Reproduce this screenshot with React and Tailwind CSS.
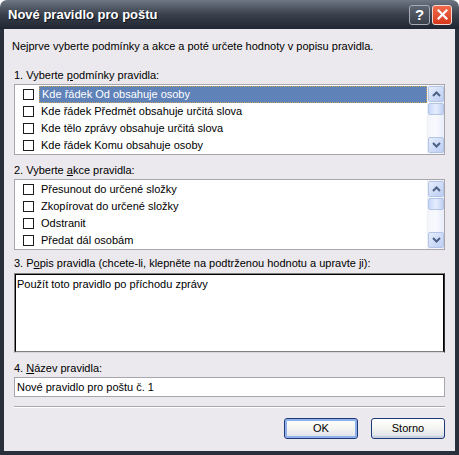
import React from "react";

const F = { fontFamily: '"Liberation Sans", Arial, sans-serif' };

function ScrollBtn({ dir }) {
  return (
    <div className="w-[16px] h-[16px] rounded-[2px] border border-[#b4c4e4] bg-gradient-to-br from-[#e6eefc] to-[#bccdf3] flex items-center justify-center">
      <svg width="9" height="6" viewBox="0 0 9 6">
        {dir === "up" ? (
          <path d="M1 5 L4.5 1.5 L8 5" fill="none" stroke="#4d6185" strokeWidth="2" />
        ) : (
          <path d="M1 1 L4.5 4.5 L8 1" fill="none" stroke="#4d6185" strokeWidth="2" />
        )}
      </svg>
    </div>
  );
}

function ScrollBar() {
  return (
    <div className="w-[17px] flex flex-col items-center py-[1px] bg-gradient-to-r from-[#f3f5fb] via-[#f8f9fd] to-[#e7edfb] border-l border-[#eef0f7]">
      <ScrollBtn dir="up" />
      <div className="w-[16px] h-[12px] mt-[1px] rounded-[2px] border border-[#b4c4e4] bg-gradient-to-r from-[#c9d8fa] via-[#e6eefc] to-[#c0d0f5]" />
      <div className="flex-1" />
      <ScrollBtn dir="down" />
    </div>
  );
}

function CheckList({ items, selected }) {
  return (
    <div className="h-[71px] border border-[#a7a6aa] bg-white flex">
      <div className="flex-1 pt-[1px] overflow-hidden">
        {items.map((t, i) => (
          <div key={i} className="h-[17px] flex items-center">
            <div className="w-[11px] h-[11px] border border-[#1c1c1c] bg-white ml-[8px] shrink-0" />
            <div
              className={
                "ml-[5px] flex-1 h-[17px] flex items-center pl-[2px] whitespace-nowrap " +
                (i === selected
                  ? "bg-[#5f82b8] text-white border border-dotted border-[#c9a25a] pl-[1px]"
                  : "text-black")
              }
            >
              {t}
            </div>
          </div>
        ))}
      </div>
      <ScrollBar />
    </div>
  );
}

function XPButton({ children, def }) {
  return (
    <div
      className={
        "w-[74px] h-[21px] rounded-[3px] border border-[#1c3a78] flex items-center justify-center text-black bg-gradient-to-b from-[#ffffff] via-[#f4f4f0] to-[#dcdfe8] " +
        (def ? "shadow-[inset_0_0_0_2px_#8fb0ea]" : "shadow-[inset_0_-2px_0_#c9cfdc]")
      }
    >
      {children}
    </div>
  );
}

export default function App() {
  return (
    <div className="w-[459px] h-[455px] flex flex-col text-[11px] leading-[13px]" style={F}>
      <div className="h-[29px] rounded-t-[7px] bg-gradient-to-b from-[#6f7784] via-[#3a414d] to-[#1f2531] flex items-center pl-[8px] pr-[7px]">
        <div className="text-white font-bold text-[13px] leading-[16px] flex-1 [text-shadow:1px_1px_0_#10141c]">
          Nové pravidlo pro poštu
        </div>
        <div className="w-[21px] h-[20px] rounded-[3px] border border-[#a6acb6] bg-gradient-to-b from-[#5e6572] to-[#3a404b] flex items-center justify-center text-white font-bold text-[15px] leading-none">
          ?
        </div>
        <div className="w-[20px] h-[20px] ml-[2px] rounded-[3px] border border-[#f2d8d0] bg-gradient-to-b from-[#f06a4a] to-[#d8381a] flex items-center justify-center">
          <svg width="11" height="11" viewBox="0 0 11 11">
            <path d="M1.5 1.5 L9.5 9.5 M9.5 1.5 L1.5 9.5" stroke="#fff" strokeWidth="2.2" strokeLinecap="square" />
          </svg>
        </div>
      </div>
      <div className="flex-1 border-x-4 border-b-4 border-[#2a303b] bg-[#ebe9ed] px-[10px] pt-[11px] text-black">
        <div className="ml-[-2px] h-[13px]">
          Nejprve vyberte podmínky a akce a poté určete hodnoty v popisu pravidla.
        </div>
        <div className="mt-[16px] h-[13px]">
          1. Vyberte <u>p</u>odmínky pravidla:
        </div>
        <div className="mt-[2px]">
          <CheckList
            selected={0}
            items={[
              "Kde řádek Od obsahuje osoby",
              "Kde řádek Předmět obsahuje určitá slova",
              "Kde tělo zprávy obsahuje určitá slova",
              "Kde řádek Komu obsahuje osoby",
            ]}
          />
        </div>
        <div className="mt-[9px] h-[13px]">
          2. Vyberte <u>a</u>kce pravidla:
        </div>
        <div className="mt-[2px]">
          <CheckList
            selected={-1}
            items={[
              "Přesunout do určené složky",
              "Zkopírovat do určené složky",
              "Odstranit",
              "Předat dál osobám",
            ]}
          />
        </div>
        <div className="mt-[7px] h-[13px]">
          3. P<u>o</u>pis pravidla (chcete-li, klepněte na podtrženou hodnotu a upravte ji):
        </div>
        <div className="mt-[3px] h-[80px] border border-t-[#808080] border-l-[#808080] border-b-[#d8d6da] border-r-[#303030]">
          <div className="h-full border border-t-black border-l-black border-b-[#808080] border-r-black bg-white px-[1px] pt-[3px]">
            Použít toto pravidlo po příchodu zprávy
          </div>
        </div>
        <div className="mt-[9px] h-[13px]">
          4. <u>N</u>ázev pravidla:
        </div>
        <div className="mt-[2px] h-[20px] border border-[#a7a6aa] bg-white flex items-center px-[2px]">
          Nové pravidlo pro poštu č. 1
        </div>
        <div className="mt-[9px] h-[2px] border-t border-[#a7a6aa] border-b border-b-white" />
        <div className="mt-[10px] flex justify-end gap-[13px] pr-[0px]">
          <XPButton def>OK</XPButton>
          <XPButton>Storno</XPButton>
        </div>
      </div>
    </div>
  );
}
